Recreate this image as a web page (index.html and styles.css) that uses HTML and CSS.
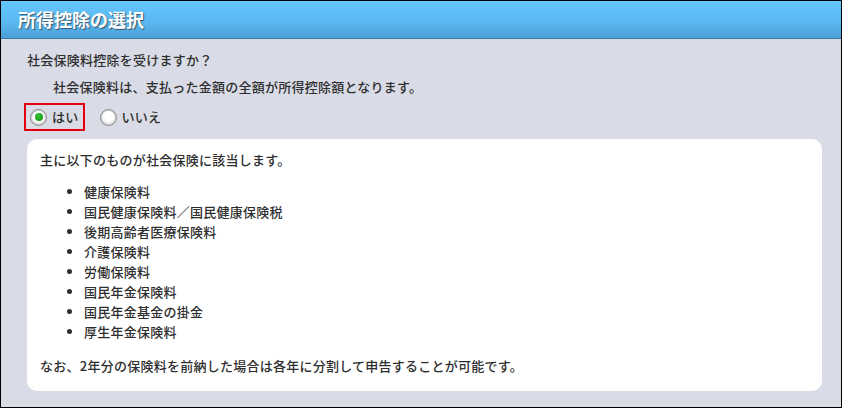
FILE: index.html
```html
<!DOCTYPE html>
<html lang="ja">
    <head>
        <meta charset="utf-8">
        <title>所得控除の選択</title>
        <link rel="stylesheet" href="styles.css">
    </head>
    <body>
        <div class="panel">
            <h2 class="head">所得控除の選択</h2>
            <div class="main">
                <p class="question">社会保険料控除を受けますか？</p>
                <p class="note">社会保険料は、支払った金額の全額が所得控除額となります。</p>

                <div class="choices">
                    <label class="choice selected"><span class="radio on"></span>はい</label>
                    <label class="choice"><span class="radio"></span>いいえ</label>
                </div>

                <div class="card">
                    <p>主に以下のものが社会保険に該当します。</p>
                    <ul>
                        <li>健康保険料</li>
                        <li>国民健康保険料／国民健康保険税</li>
                        <li>後期高齢者医療保険料</li>
                        <li>介護保険料</li>
                        <li>労働保険料</li>
                        <li>国民年金保険料</li>
                        <li>国民年金基金の掛金</li>
                        <li>厚生年金保険料</li>
                    </ul>
                    <p class="last">なお、2年分の保険料を前納した場合は各年に分割して申告することが可能です。</p>
                </div>
            </div>
        </div>
    </body>
</html>
```

FILE: styles.css
```css
body {
    margin: 0;
    font-family: "Noto Sans CJK JP", "Noto Sans", sans-serif;
    font-size: 13px;
    font-weight: 500;
    line-height: 20px;
    letter-spacing: 0.25px;
    color: #2e2e2e;
}

.panel {
    width: 842px;
    height: 408px;
    box-sizing: border-box;
    border: 1px solid #000;
    background-color: #d9dce6;
}

.head {
    margin: 0;
    height: 37px;
    padding-left: 17px;
    line-height: 37px;
    font-size: 18px;
    font-weight: bold;
    letter-spacing: 0;
    color: #fff;
    text-shadow: 1px 1px 1px #34536f;
    background: linear-gradient(#64c6fd, #5ab7ef 60%, #4b9fd6);
    border-bottom: 1px solid #3a7ba4;
}

.main {
    padding: 0 19px 0 26px;
}

p {
    margin: 0;
}

.question {
    margin-top: 11px;
}

.note {
    margin: 7px 0 0 26px;
}

.choices {
    display: flex;
    align-items: center;
    margin: 6px 0 0 -3px;
}

.choice {
    display: flex;
    align-items: center;
    height: 24px;
    padding: 0 4px 0 4px;
    border: 2px solid transparent;
    margin-right: 9px;
}

.choice.selected {
    border-color: #e5000f;
}

.radio {
    width: 15px;
    height: 15px;
    margin-right: 5px;
    border-radius: 50%;
    border: 1px solid #8a8a8a;
    background: radial-gradient(circle at 50% 40%, #fff 40%, #e8e8e8 70%, #b5b5b5);
    box-shadow: inset 0 0 0 1px #cfcfcf;
    display: flex;
    align-items: center;
    justify-content: center;
}

.radio.on::after {
    content: "";
    width: 8px;
    height: 8px;
    border-radius: 50%;
    background: radial-gradient(circle at 40% 35%, #34c234, #109010);
}

.card {
    margin-top: 8px;
    height: 252px;
    box-sizing: border-box;
    padding: 11px 13px 0;
    background-color: #fff;
    border-radius: 10px;
}

ul {
    margin: 12px 0 0;
    padding-left: 44px;
}

.last {
    margin-top: 14px;
}
```
